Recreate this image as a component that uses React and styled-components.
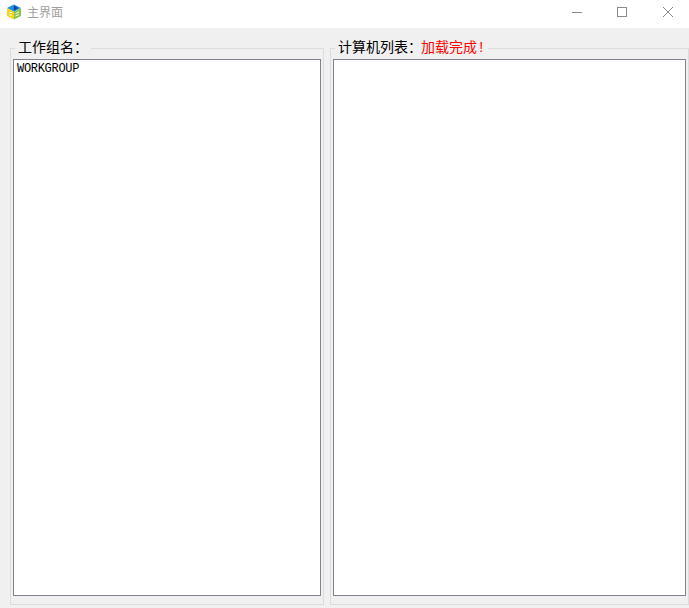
import React from "react";
import styled, { createGlobalStyle } from "styled-components";

const GlobalStyle = createGlobalStyle`
  html, body {
    margin: 0;
    padding: 0;
    background: #f0f0f0;
  }
  body {
    font-family: "Noto Sans CJK SC", "Liberation Sans", sans-serif;
  }
`;

const Window = styled.div`
  width: 689px;
  height: 608px;
  display: flex;
  flex-direction: column;
  overflow: hidden;
  background: #f0f0f0;
`;

const TitleBar = styled.header`
  height: 28px;
  box-sizing: border-box;
  flex: none;
  display: flex;
  align-items: center;
  background: #fff;
  padding: 0 0 4px 6px;
`;

const AppTitle = styled.span`
  margin-left: 5px;
  font-size: 12px;
  line-height: 16px;
  color: #a0a0a0;
`;

const Controls = styled.div`
  margin-left: auto;
  margin-right: -2px;
  display: flex;
`;

const ControlButton = styled.div`
  width: ${(p) => p.$width || 46}px;
  height: 24px;
  display: flex;
  align-items: center;
  justify-content: center;
`;

const Panels = styled.main`
  flex: 1;
  min-height: 0;
  display: flex;
  gap: 6px;
  padding: 9px 0 3px 10px;
`;

const Group = styled.fieldset`
  width: ${(p) => p.$width}px;
  box-sizing: border-box;
  margin: 0;
  padding: 0 2px 8px;
  min-width: 0;
  display: flex;
  flex-direction: column;
  border: 1px solid #dcdcdc;
`;

const GroupTitle = styled.legend`
  margin-left: 2px;
  padding: 0 3px 4px;
  height: 18px;
  font-size: 14px;
  line-height: 18px;
  color: #000;
`;

const Status = styled.span`
  margin-left: -1px;
  font-family: "Liberation Mono", "Noto Sans CJK SC", monospace;
  color: #ff0000;
`;

const ListBox = styled.div`
  flex: 1;
  box-sizing: border-box;
  background: #fff;
  border: 1px solid #82828f;
  padding: 2px 3px;
`;

const ListItem = styled.div`
  font-family: "Liberation Mono", monospace;
  font-size: 12px;
  letter-spacing: -0.3px;
  line-height: 14px;
  color: #000;
`;

const Logo = () => (
  <svg width="16" height="16" viewBox="0 0 16 16">
    <path d="M8 0.5 15 4 8 7.8 1 4Z" fill="#1f8fe0" />
    <path d="M8 1.5 12 4 8 6.4Z" fill="#0b3f9e" />
    <path d="M1 4 8 7.8V15.5L1 12Z" fill="#f6d31c" />
    <path d="M15 4 8 7.8V15.5L15 12Z" fill="#8cc34a" />
    <path d="M3.5 8.5h2.5M3.5 11h2.5M9.5 9.5 13 8M9.5 12 13 10.5" stroke="#fff" strokeWidth="1" />
  </svg>
);

const Minimize = () => (
  <svg width="10" height="10" viewBox="0 0 10 10">
    <path d="M0 5.5H10" stroke="#8a8a8a" strokeWidth="1" />
  </svg>
);

const Maximize = () => (
  <svg width="10" height="10" viewBox="0 0 10 10">
    <rect x="0.5" y="0.5" width="9" height="9" fill="none" stroke="#8a8a8a" />
  </svg>
);

const Close = () => (
  <svg width="10" height="10" viewBox="0 0 10 10">
    <path d="M0 0 10 10M10 0 0 10" stroke="#8a8a8a" strokeWidth="1" />
  </svg>
);

const App = () => {
  return (
    <Window>
      <GlobalStyle />
      <TitleBar>
        <Logo />
        <AppTitle>主界面</AppTitle>
        <Controls>
          <ControlButton $width={44}>
            <Minimize />
          </ControlButton>
          <ControlButton>
            <Maximize />
          </ControlButton>
          <ControlButton>
            <Close />
          </ControlButton>
        </Controls>
      </TitleBar>
      <Panels>
        <Group $width={314}>
          <GroupTitle>工作组名：</GroupTitle>
          <ListBox>
            <ListItem>WORKGROUP</ListItem>
          </ListBox>
        </Group>
        <Group $width={359}>
          <GroupTitle>
            计算机列表：<Status>加载完成!</Status>
          </GroupTitle>
          <ListBox />
        </Group>
      </Panels>
    </Window>
  );
};

export default App;
